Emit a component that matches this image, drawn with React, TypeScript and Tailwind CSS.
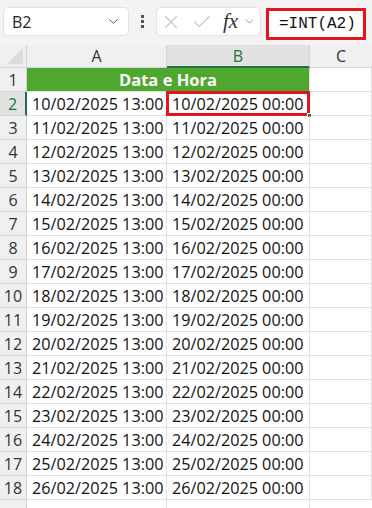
import { ChevronDown, X, Check } from "lucide-react"

const rows = Array.from({ length: 17 }, (_, i) => {
  const d = String(10 + i).padStart(2, "0")
  return { n: i + 2, a: `${d}/02/2025 13:00`, b: `${d}/02/2025 00:00` }
})

const cell = "border-r border-b border-[#e1e1e1] h-[24px] flex items-end leading-none pb-[3px]"
const rowHead = "h-[24px] flex items-end justify-center text-[16px] leading-none pb-[3px]"

export default function App() {
  return (
    <div className="w-[372px] h-[508px] overflow-hidden bg-white text-[#111]" style={{ fontFamily: '"Open Sans", "Liberation Sans", sans-serif' }}>
      {/* formula bar */}
      <div className="h-[45px] bg-[#f3f3f3] flex items-start pt-[7px] pl-[3px]">
        <div className="w-[126px] h-[29px] bg-white border border-[#e3e3e3] rounded-[5px] flex items-center pl-[8px] pr-[7px] justify-between">
          <span className="text-[16px] leading-none text-[#222]">B2</span>
          <ChevronDown className="w-[15px] h-[15px] text-[#555]" strokeWidth={1.6} />
        </div>
        <div className="w-[27px] h-[29px] flex flex-col items-center justify-center gap-[2px]">
          <span className="w-[3px] h-[3px] bg-[#555]" />
          <span className="w-[3px] h-[3px] bg-[#555]" />
          <span className="w-[3px] h-[3px] bg-[#555]" />
        </div>
        <div className="w-[105px] h-[29px] bg-white border border-[#e3e3e3] rounded-[5px] flex items-center pl-[3px] gap-[5px]">
          <X className="w-[22px] h-[22px] text-[#c4c4c4]" strokeWidth={1.2} />
          <Check className="w-[22px] h-[22px] text-[#c4c4c4] ml-[4px]" strokeWidth={1.2} />
          <span className="ml-[5px] text-[21px] italic leading-none text-[#333]" style={{ fontFamily: '"Liberation Serif", serif' }}>fx</span>
          <ChevronDown className="w-[13px] h-[13px] text-[#888]" strokeWidth={1.6} />
        </div>
        <div className="ml-[5px] w-[100px] h-[32px] mt-[1px] bg-white border-[3px] border-[#e2141e] flex items-center pl-[10px]">
          <span className="text-[16px] leading-none text-[#111]" style={{ fontFamily: '"Liberation Mono", monospace' }}>=INT(A2)</span>
        </div>
      </div>

      {/* sheet */}
      <div className="grid grid-cols-[27px_140px_143px_62px]">
        {/* column headers */}
        <div className="relative h-[23px] bg-[#f0f0f0] border-r border-b border-[#d4d4d4]">
          <div className="absolute right-[3px] bottom-[3px] w-0 h-0 border-l-[16px] border-l-transparent border-b-[16px] border-b-[#dcdcdc]" />
        </div>
        <div className="h-[23px] bg-[#f0f0f0] border-r border-b border-[#d4d4d4] flex items-center justify-center text-[16px] text-[#333]">A</div>
        <div className="h-[23px] bg-[#e1e1e1] border-r border-b-2 border-r-[#d4d4d4] border-b-[#1e7145] flex items-center justify-center text-[16px] text-[#1e7145]">B</div>
        <div className="h-[23px] bg-[#f0f0f0] border-b border-[#d4d4d4] flex items-center justify-center text-[16px] text-[#333]">C</div>

        {/* row 1 */}
        <div className={`${rowHead} bg-[#f0f0f0] border-r border-b border-[#d4d4d4] text-[#333]`}>1</div>
        <div className="col-span-2 h-[24px] bg-[#4ea72e] border-r border-b border-[#e1e1e1] flex items-end justify-center leading-none pb-[3px]">
          <span className="text-[16.5px] font-bold text-white">Data e Hora</span>
        </div>
        <div className={cell} />

        {rows.map((r) => {
          const sel = r.n === 2
          return (
            <div key={r.n} className="contents">
              <div
                className={
                  sel
                    ? `${rowHead} bg-[#e1e1e1] border-r-2 border-r-[#1e7145] border-b border-b-[#d4d4d4] text-[#1e7145]`
                    : `${rowHead} bg-[#f0f0f0] border-r border-b border-[#d4d4d4] text-[#333]`
                }
              >
                {r.n}
              </div>
              <div className={`${cell} pl-[5px] text-[16.2px]`}>{r.a}</div>
              <div className={`${cell} pl-[5px] text-[16.2px] relative`}>
                {r.b}
                {sel && (
                  <>
                    <div className="absolute -left-[1px] -top-[1px] -right-[1px] -bottom-[1px] border-[3px] border-[#e2141e]" />
                    <div className="absolute -right-[3px] -bottom-[3px] w-[5px] h-[5px] bg-[#1e7145] border border-white" />
                  </>
                )}
              </div>
              <div className={cell} />
            </div>
          )
        })}

        {/* partial row 19 */}
        <div className="h-[24px] bg-[#f0f0f0] border-r border-[#d4d4d4]" />
        <div className="h-[24px] border-r border-[#e1e1e1]" />
        <div className="h-[24px] border-r border-[#e1e1e1]" />
        <div className="h-[24px]" />
      </div>
    </div>
  )
}
